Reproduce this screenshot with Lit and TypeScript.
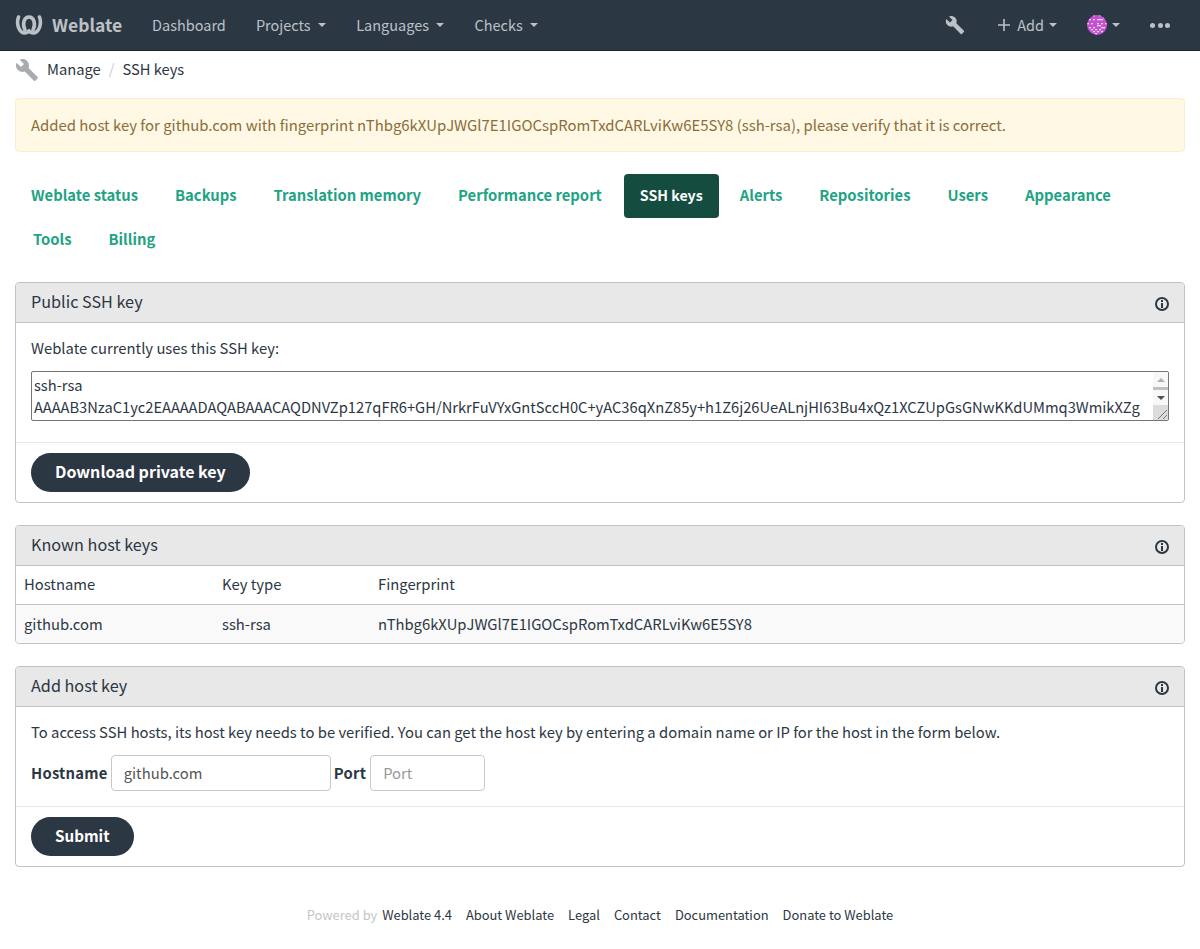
import { css, html, LitElement, svg } from "lit";
import { customElement } from "lit/decorators.js";

const WRENCH = "M22.7 19l-9.1-9.1c.9-2.3.4-5-1.5-6.9-2-2-5-2.4-7.4-1.3L9 6 6 9 1.6 4.7C.4 7.1.9 10.1 2.9 12.1c1.9 1.9 4.6 2.4 6.9 1.5l9.1 9.1c.4.4 1 .4 1.4 0l2.3-2.3c.5-.4.5-1.1.1-1.4z";
const KEY =
  "AAAAB3NzaC1yc2EAAAADAQABAAACAQDNVZp127qFR6+GH/NrkrFuVYxGntSccH0C+yAC36qXnZ85y+h1Z6j26UeALnjHI63Bu4xQz1XCZUpGsGNwKKdUMmq3WmikXZg";
const FINGERPRINT = "nThbg6kXUpJWGl7E1IGOCspRomTxdCARLviKw6E5SY8";

const wrench = (size: number) => html`<svg width=${size} height=${size} viewBox="0 0 24 24" fill="currentColor"><path d=${WRENCH}></path></svg>`;

const infoIcon = html`<svg class="info" width="16" height="16" viewBox="0 0 16 16" fill="currentColor">
  <circle cx="8" cy="8" r="6" fill="none" stroke="currentColor" stroke-width="2"></circle>
  <rect x="7" y="7" width="2" height="5"></rect>
  <rect x="7" y="4" width="2" height="2"></rect>
</svg>`;

const avatarCells = [
  [3, 0], [6, 0], [8, 1], [1, 2], [3, 2], [5, 2], [6, 2], [7, 2], [0, 4], [2, 4], [5, 4], [7, 4], [9, 4],
  [1, 6], [3, 6], [5, 5], [6, 5], [7, 6], [8, 6], [2, 7], [4, 7], [6, 7], [3, 8], [5, 8], [7, 8], [4, 9],
];

@customElement("app-root")
export class AppRoot extends LitElement {
  static styles = css`
    :host {
      display: block;
      font-family: "Noto Sans CJK SC", "Noto Sans", sans-serif;
      font-size: 14.8px;
      line-height: 22px;
      color: #2c3744;
      background: #fff;
      min-height: 949px;
    }
    a {
      color: inherit;
      text-decoration: none;
    }
    .navbar {
      height: 50px;
      background: #2c3744;
      border-bottom: 1px solid #1c242d;
      display: flex;
      align-items: center;
      color: #bcc1c6;
      font-size: 14.5px;
    }
    .brand {
      display: flex;
      align-items: center;
      gap: 9px;
      width: 137px;
      padding-left: 15px;
      box-sizing: border-box;
      font-size: 17.5px;
      font-weight: 700;
    }
    .nav-item {
      display: flex;
      align-items: center;
      padding: 0 15px;
    }
    .caret {
      display: inline-block;
      width: 0;
      height: 0;
      margin-left: 7.5px;
      border-top: 4px solid currentColor;
      border-left: 4px solid transparent;
      border-right: 4px solid transparent;
    }
    .spacer {
      flex: 1;
    }
    .tool {
      display: flex;
      margin-right: 16px;
    }
    .add {
      margin-right: 15px;
      gap: 5px;
    }
    .add .caret {
      margin-left: 0;
    }
    .avatar-item {
      padding: 0;
      margin-right: 30px;
    }
    .avatar-item .caret {
      margin-left: 5px;
    }
    .more {
      display: flex;
      gap: 2.5px;
      margin-right: 30px;
    }
    .more i {
      width: 5px;
      height: 5px;
      border-radius: 50%;
      background: currentColor;
    }
    .breadcrumb {
      display: flex;
      align-items: center;
      height: 37px;
      box-sizing: border-box;
      padding: 0 15px 2px;
      color: #2c3744;
      font-size: 14.7px;
    }
    .breadcrumb svg {
      color: #a9acaf;
      margin: 2px 8px 0 0;
    }
    .breadcrumb .sep {
      color: #ccc;
      margin: 0 8px;
    }
    .content {
      padding: 10px 15px 0;
    }
    .alert {
      height: 54px;
      box-sizing: border-box;
      display: flex;
      align-items: center;
      padding: 0 15px;
      background: #fff8e4;
      border: 1px solid #faeecb;
      border-radius: 4px;
      color: #8a6d3b;
      font-size: 14.9px;
    }
    .tabs {
      display: flex;
      flex-wrap: wrap;
      margin: 22px 0 20px;
    }
    .tab {
      height: 44px;
      box-sizing: border-box;
      display: flex;
      align-items: center;
      padding: 0 16px 2px;
      margin-right: 5px;
      border-radius: 4px;
      color: #1fa385;
      font-weight: 600;
    }
    .tab.active {
      margin-left: 1px;
      background: #144d3f;
      color: #fff;
      font-size: 14.2px;
    }
    .tab.next-row {
      margin-left: 2px;
    }
    .panel {
      border: 1px solid #bdc3c7;
      border-radius: 4px;
      margin-bottom: 22px;
      overflow: hidden;
    }
    .panel-heading {
      height: 39px;
      display: flex;
      align-items: center;
      justify-content: space-between;
      padding: 0 14px 0 15px;
      background: #e8e8e8;
      border-bottom: 1px solid #bdc3c7;
      font-size: 16.2px;
    }
    .panel-heading span {
      margin-bottom: 3px;
    }
    .panel-heading .info {
      margin-top: 2px;
    }
    .panel-body {
      padding: 15px;
    }
    .panel-body p {
      margin: -1px 0 12px;
    }
    .key-box {
      display: flex;
      height: 50px;
      box-sizing: border-box;
      margin-bottom: 6px;
      border: 1px solid #767676;
      border-radius: 2px;
      overflow: hidden;
    }
    .key-text {
      flex: 1;
      min-width: 0;
      padding: 2px;
      overflow-wrap: anywhere;
      font-size: 14.7px;
      line-height: 22px;
    }
    .scroll {
      width: 15px;
      flex: none;
      display: flex;
      flex-direction: column;
      background: #f8f8f8;
    }
    .scroll .arrow {
      height: 15px;
      display: flex;
      align-items: center;
      justify-content: center;
    }
    .scroll .up {
      width: 0;
      height: 0;
      border-left: 4px solid transparent;
      border-right: 4px solid transparent;
      border-bottom: 4px solid #b0b0b0;
    }
    .scroll .down {
      width: 0;
      height: 0;
      border-left: 4px solid transparent;
      border-right: 4px solid transparent;
      border-top: 4px solid #505050;
    }
    .scroll .thumb {
      height: 3px;
      background: #c1c1c1;
    }
    .scroll .corner {
      margin-top: auto;
      height: 15px;
      display: flex;
      background: #dcdcdc;
    }
    .panel-footer {
      padding: 10px 15px;
      border-top: 1px solid #e8e8e8;
    }
    .btn {
      display: inline-block;
      height: 39px;
      box-sizing: border-box;
      padding: 0 24px 2px;
      border: 0;
      border-radius: 20px;
      background: #2c3744;
      color: #fff;
      font: 600 16px/37px "Noto Sans CJK SC", "Noto Sans", sans-serif;
    }
    .btn.submit {
      font-size: 15.2px;
    }
    table {
      width: 100%;
      border-collapse: collapse;
    }
    th,
    td {
      height: 38px;
      padding: 0 8px;
      text-align: left;
      font-weight: 400;
    }
    th {
      height: 36px;
      border-bottom: 1px solid #bdc3c7;
      padding-bottom: 2px;
    }
    td {
      background: #f9f9f9;
    }
    .col-host {
      width: 182px;
    }
    .col-type {
      width: 140px;
    }
    .form {
      display: flex;
      align-items: center;
      gap: 3px;
    }
    .form label {
      font-weight: 700;
      letter-spacing: 0.25px;
    }
    .form label.port-label {
      padding-right: 1px;
    }
    .form .field {
      height: 36px;
      box-sizing: border-box;
      display: flex;
      align-items: center;
      padding: 0 12px;
      border: 1px solid #c8c8c8;
      border-radius: 4px;
    }
    .field.host {
      width: 220px;
      color: #555;
    }
    .field.port {
      width: 115px;
      color: #999;
    }
    .footer {
      display: flex;
      justify-content: center;
      gap: 14px;
      margin-top: 38px;
      font-size: 12.9px;
      line-height: 20px;
      color: #2c3744;
    }
    .footer .dim {
      color: #c5c5c5;
      margin-right: 2px;
    }
  `;

  private panel(title: string, body: unknown) {
    return html`<section class="panel">
      <div class="panel-heading"><span>${title}</span>${infoIcon}</div>
      ${body}
    </section>`;
  }

  render() {
    const row1 = ["Weblate status", "Backups", "Translation memory", "Performance report", "SSH keys", "Alerts", "Repositories", "Users", "Appearance"];
    return html`
      <nav class="navbar">
        <a class="brand">
          <svg width="28" height="20" viewBox="0 0 28 20" fill="none" stroke="currentColor" stroke-width="3.6" stroke-linecap="round">
            <path d="M3.500 2C1 9 4 18 10 18c2.500 0 4-2 4-2"></path>
            <path d="M24.500 2C27 9 24 18 18 18c-2.500 0-4-2-4-2"></path>
            <path d="M10 15C7 9 9 2 14 2s7 7 4 13"></path>
          </svg>
          Weblate
        </a>
        <a class="nav-item">Dashboard</a>
        <a class="nav-item">Projects<span class="caret"></span></a>
        <a class="nav-item">Languages<span class="caret"></span></a>
        <a class="nav-item">Checks<span class="caret"></span></a>
        <div class="spacer"></div>
        <a class="tool">${wrench(20)}</a>
        <a class="nav-item add">
          <svg width="16" height="16" viewBox="0 0 16 16" fill="currentColor"><path d="M7.200 2h1.600v5.200H14v1.600H8.800V14H7.200V8.800H2V7.200h5.200z"></path></svg>
          Add<span class="caret"></span>
        </a>
        <a class="nav-item avatar-item">
          <svg width="20" height="20" viewBox="0 0 20 20">
            <defs><clipPath id="av"><circle cx="10" cy="10" r="10"></circle></clipPath></defs>
            <g clip-path="url(#av)">
              <rect width="20" height="20" fill="#c550d2"></rect>
              ${avatarCells.map(([x, y]) => svg`<rect x=${x * 2} y=${y * 2} width="2" height="1.300" fill="#f3d6f5"></rect>`)}
            </g>
          </svg>
          <span class="caret"></span>
        </a>
        <a class="more"><i></i><i></i><i></i></a>
      </nav>

      <div class="breadcrumb">
        ${wrench(24)}
        <a>Manage</a><span class="sep">/</span><a>SSH keys</a>
      </div>

      <main class="content">
        <div class="alert">Added host key for github.com with fingerprint ${FINGERPRINT} (ssh-rsa), please verify that it is correct.</div>

        <div class="tabs">
          ${row1.map((t) => html`<a class="tab ${t === "SSH keys" ? "active" : ""}">${t}</a>`)}
          <a class="tab next-row">Tools</a>
          <a class="tab">Billing</a>
        </div>

        ${this.panel("Public SSH key", html`
          <div class="panel-body">
            <p>Weblate currently uses this SSH key:</p>
            <div class="key-box">
              <div class="key-text">ssh-rsa<br />${KEY}</div>
              <div class="scroll">
                <div class="arrow"><span class="up"></span></div>
                <div class="thumb"></div>
                <div class="arrow"><span class="down"></span></div>
                <div class="corner">
                  <svg width="15" height="15" viewBox="0 0 15 15" fill="none" stroke="#777" stroke-width="1"><path d="M5 14 14 5M10 14l4-4"></path></svg>
                </div>
              </div>
            </div>
          </div>
          <div class="panel-footer"><button class="btn">Download private key</button></div>
        `)}

        ${this.panel("Known host keys", html`
          <table>
            <tr><th class="col-host">Hostname</th><th class="col-type">Key type</th><th>Fingerprint</th></tr>
            <tr><td>github.com</td><td>ssh-rsa</td><td>${FINGERPRINT}</td></tr>
          </table>
        `)}

        ${this.panel("Add host key", html`
          <div class="panel-body">
            <p>To access SSH hosts, its host key needs to be verified. You can get the host key by entering a domain name or IP for the host in the form below.</p>
            <div class="form">
              <label>Hostname</label><span class="field host">github.com</span>
              <label class="port-label">Port</label><span class="field port">Port</span>
            </div>
          </div>
          <div class="panel-footer"><button class="btn submit">Submit</button></div>
        `)}

        <footer class="footer">
          <span><span class="dim">Powered by</span> <a>Weblate 4.4</a></span>
          <a>About Weblate</a><a>Legal</a><a>Contact</a><a>Documentation</a><a>Donate to Weblate</a>
        </footer>
      </main>
    `;
  }
}
